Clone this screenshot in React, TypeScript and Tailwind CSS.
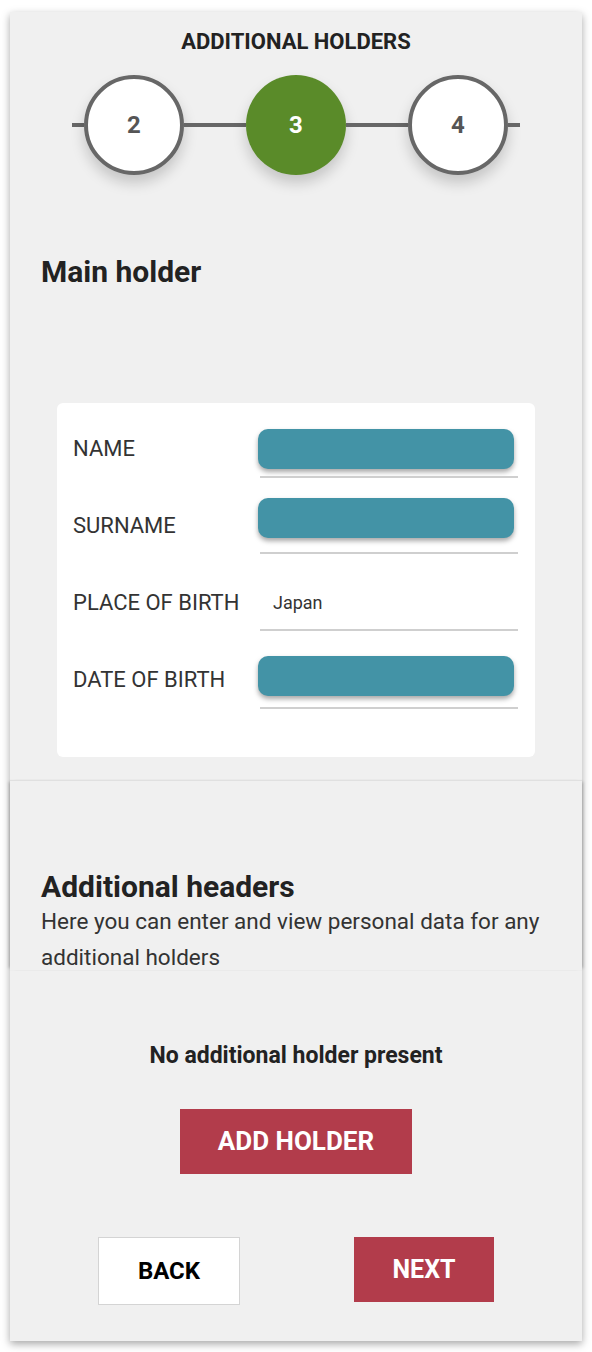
import React from "react";

const font = { fontFamily: "Roboto, 'Open Sans', sans-serif" };

function Step({ n, active }: { n: number; active?: boolean }) {
  return (
    <div
      className={
        active
          ? "w-[100px] h-[100px] rounded-full bg-[#5a8b29] flex items-center justify-center shadow-[0_8px_14px_rgba(0,0,0,0.18)] shrink-0"
          : "w-[100px] h-[100px] rounded-full bg-white border-[4px] border-[#676767] flex items-center justify-center shadow-[0_8px_14px_rgba(0,0,0,0.18)] shrink-0"
      }
    >
      <span className={active ? "text-white text-[24px] font-bold" : "text-[#555] text-[24px] font-bold"}>{n}</span>
    </div>
  );
}

function Segment({ w }: { w: string }) {
  return <div className={`h-[4px] bg-[#676767] ${w}`} />;
}

function Row({
  label,
  labelTop,
  barTop,
  height,
  value,
}: {
  label: string;
  labelTop: string;
  barTop: string;
  height: string;
  value?: string;
}) {
  return (
    <div className={`flex ${height}`}>
      <div className={`w-[185px] shrink-0 text-[22px] leading-[24px] text-[#333] ${labelTop}`}>{label}</div>
      <div className="flex flex-col w-[260px]">
        {value ? (
          <div className={`pl-[15px] text-[18px] leading-[22px] text-[#333] ${barTop}`}>{value}</div>
        ) : (
          <div className={`w-[256px] h-[40px] rounded-[10px] bg-[#4393a6] shadow-[0_3px_5px_rgba(0,0,0,0.35)] ${barTop}`} />
        )}
        <div className="mt-auto ml-[2px] w-[258px] h-[2px] bg-[#cfcfcf]" />
      </div>
    </div>
  );
}

export default function App() {
  return (
    <div className="min-h-screen bg-white px-[10px] pt-[12px] pb-[10px]" style={font}>
      <div className="bg-[#f0f0f0] shadow-[0_3px_8px_rgba(0,0,0,0.35)] flex flex-col">
        {/* Stepper */}
        <div className="pt-[18px] flex flex-col items-center">
          <h2 className="text-[22px] leading-[24px] font-bold text-[#222]">ADDITIONAL HOLDERS</h2>
          <div className="mt-[21px] flex items-center self-start ml-[62px]">
            <Segment w="w-[12px]" />
            <Step n={2} />
            <Segment w="w-[62px]" />
            <Step n={3} active />
            <Segment w="w-[62px]" />
            <Step n={4} />
            <Segment w="w-[12px]" />
          </div>
        </div>

        {/* Main holder */}
        <div className="px-[31px] mt-[81px]">
          <h1 className="text-[30px] leading-[32px] font-bold text-[#222]">Main holder</h1>
        </div>

        <div className="mx-[47px] mt-[115px] bg-white rounded-[6px] pl-[16px] pt-[17px] pb-[48px]">
          <Row label="NAME" labelTop="pt-[17px]" barTop="mt-[9px]" height="h-[58px]" />
          <Row label="SURNAME" labelTop="pt-[36px]" barTop="mt-[20px]" height="h-[76px]" />
          <Row label="PLACE OF BIRTH" labelTop="pt-[37px]" barTop="mt-[38px]" height="h-[77px]" value="Japan" />
          <Row label="DATE OF BIRTH" labelTop="pt-[37px]" barTop="mt-[25px]" height="h-[78px]" />
        </div>

        {/* Additional holders */}
        <div className="mt-[23px] border-t border-[#e0e0e0] shadow-[-3px_0_3px_-2px_rgba(0,0,0,0.25),3px_0_3px_-2px_rgba(0,0,0,0.25)] h-[190px]" />
        <div className="-mt-[190px] px-[31px] pt-[91px]">
          <h1 className="text-[30px] leading-[32px] font-bold text-[#222]">Additional headers</h1>
          <p className="text-[22.5px] leading-[36px] text-[#333]">
            Here you can enter and view personal data for any additional holders
          </p>
        </div>

        <div className="mt-[69px] flex flex-col items-center">
          <p className="text-[23px] leading-[24px] font-bold text-[#222]">No additional holder present</p>
          <button className="mt-[41px] w-[232px] h-[65px] bg-[#b23c4b] text-white text-[26px] font-bold">
            ADD HOLDER
          </button>
        </div>

        <div className="mt-[63px] flex items-start pl-[88px] pb-[36px]">
          <button className="w-[142px] h-[68px] bg-white border border-[#d4d4d4] text-black text-[24px] font-bold">
            BACK
          </button>
          <button className="ml-[114px] w-[140px] h-[65px] bg-[#b23c4b] text-white text-[25px] font-bold">
            NEXT
          </button>
        </div>
      </div>
    </div>
  );
}
